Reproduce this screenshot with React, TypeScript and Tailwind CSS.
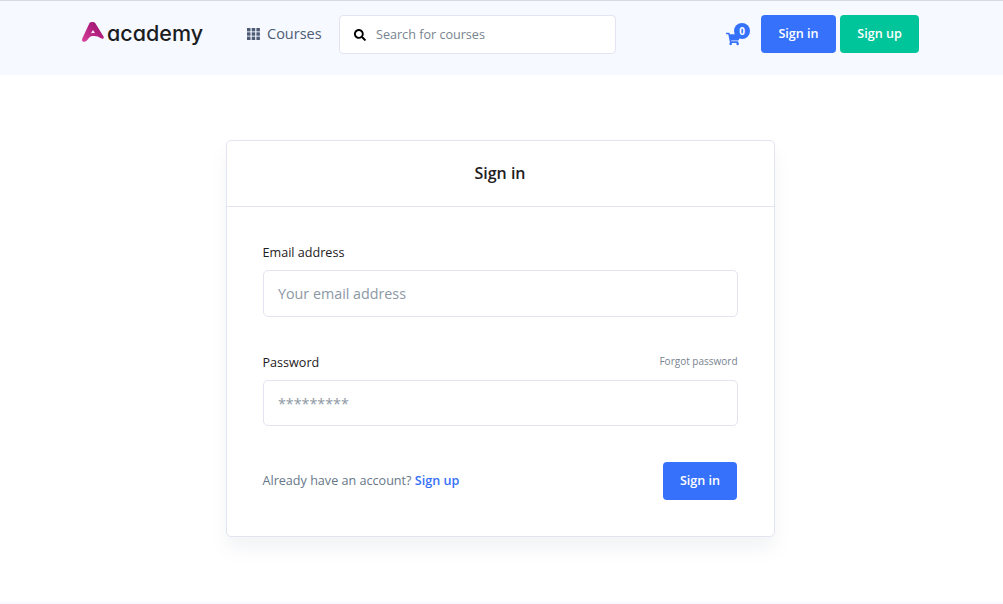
import React from 'react'
import { FaSearch, FaShoppingCart } from 'react-icons/fa'

const font = 'font-["Open_Sans","Noto_Sans",sans-serif]'

function Logo() {
    return (
        <div className="flex items-center">
            <svg width="22" height="20" viewBox="0 0 22 20" className="mr-[3px] -mt-[5px]">
                <defs>
                    <linearGradient id="logoGrad" x1="0" y1="1" x2="1" y2="0">
                        <stop offset="0" stopColor="#d8459c" />
                        <stop offset="0.55" stopColor="#b3207f" />
                        <stop offset="1" stopColor="#8f1a6f" />
                    </linearGradient>
                </defs>
                <path d="M7.500 1C8.800-.3 12-.3 13.200 1L21.500 14.500C22.300 16 21 17.500 19.500 16.500C16.500 14.500 14 13.800 11 14C8.500 14.200 7 15.500 5.500 17.800C4.500 19.300 2.300 20.300.8 19.500C-.2 19-.1 17.500.5 16ZM11 8L9 11.300C10.300 10.900 12 10.900 13 11.300Z" fill="url(#logoGrad)" fillRule="evenodd" />
            </svg>
            <span className="font-['Inter',sans-serif] [font-feature-settings:'cv11'] text-[21.500px] leading-none font-medium text-[#1c1d1f]">academy</span>
        </div>
    )
}

function Field({ label, placeholder, aside, inputHeight }: { label: string; placeholder: string; aside?: string; inputHeight: string }) {
    return (
        <div>
            <div className="flex items-center justify-between h-[19px] mb-[8px]">
                <label className="pt-[2px] text-[12.600px] text-[#1e2022]">{label}</label>
                {aside && <a className="pb-[2px] text-[10px] text-[#77838f]">{aside}</a>}
            </div>
            <input
                placeholder={placeholder}
                className={`block w-full ${inputHeight} px-[14.500px] bg-white border border-[#e3e4f1] rounded-[5px] text-[14.300px] placeholder:text-[#8c98a4]`}
            />
        </div>
    )
}

export default function App() {
    return (
        <div className={`${font} min-h-[604px] bg-white flex flex-col`}>
            {/* Header */}
            <header className="h-[75px] bg-[#f6f9ff] border-t border-[#d5d9e0] flex items-start pt-[14px] pl-[82px]">
                <div className="w-[165px] h-[38px] flex items-center"><Logo /></div>
                <button className="h-[38px] flex items-center gap-[7px] text-[14.500px] text-[#4d5b75] w-[92px]">
                    <svg width="13" height="12" viewBox="0 0 13 12" fill="#4d5b75">
                        <rect x="0" y="0" width="3.500" height="3.400" /><rect x="4.700" y="0" width="3.500" height="3.400" /><rect x="9.400" y="0" width="3.500" height="3.400" />
                        <rect x="0" y="4.300" width="3.500" height="3.400" /><rect x="4.700" y="4.300" width="3.500" height="3.400" /><rect x="9.400" y="4.300" width="3.500" height="3.400" />
                        <rect x="0" y="8.600" width="3.500" height="3.400" /><rect x="4.700" y="8.600" width="3.500" height="3.400" /><rect x="9.400" y="8.600" width="3.500" height="3.400" />
                    </svg>
                    Courses
                </button>
                <div className="w-[277px] h-[39px] bg-white border border-[#e3e4f1] rounded-[4px] flex items-center pl-[14px] gap-[10px]">
                    <FaSearch className="text-black text-[12px]" />
                    <span className="text-[12.600px] text-[#77838f] pt-[1px]">Search for courses</span>
                </div>
                <div className="relative ml-[110px] w-[35px] h-[38px]">
                    <FaShoppingCart className="absolute left-0 top-[17px] text-[14px] text-[#3671fb]" />
                    <span className="absolute left-[8px] top-[8px] w-[16px] h-[16px] rounded-full bg-[#3671fb] text-white text-[10px] font-bold flex items-center justify-center">0</span>
                </div>
                <button className="w-[75px] h-[38px] bg-[#3671fb] rounded-[4px] text-white text-[12.600px] font-semibold">Sign in</button>
                <button className="ml-[4px] w-[79px] h-[38px] bg-[#00c49a] rounded-[4px] text-white text-[12.600px] font-semibold">Sign up</button>
            </header>

            {/* Sign in card */}
            <main className="flex-1 flex justify-center pt-[65px] pr-[3px]">
                <div className="w-[549px] h-[397px] bg-white border border-[#e3e4f1] rounded-[5px] shadow-[0_12px_15px_rgba(140,152,164,0.1)]">
                    <div className="h-[66px] pb-[2px] border-b border-[#e3e4f1] flex items-center justify-center text-[16px] font-semibold text-[#1e2022]">
                        Sign in
                    </div>
                    <div className="px-[36px] pt-[36px]">
                        <Field label="Email address" placeholder="Your email address" inputHeight="h-[47px]" />
                        <div className="mt-[36px]">
                            <Field label="Password" placeholder="*********" aside="Forgot password" inputHeight="h-[46px]" />
                        </div>
                        <div className="mt-[36px] flex items-center justify-between">
                            <p className="text-[12.600px] text-[#677788]">
                                Already have an account? <a className="font-semibold text-[#3671fb]">Sign up</a>
                            </p>
                            <button className="mr-px w-[74px] h-[38px] pl-[1px] bg-[#3671fb] rounded-[4px] text-white text-[12.600px] font-semibold">Sign in</button>
                        </div>
                    </div>
                </div>
            </main>
            <div className="h-[2px] bg-[#f6f9ff]" />
        </div>
    )
}
